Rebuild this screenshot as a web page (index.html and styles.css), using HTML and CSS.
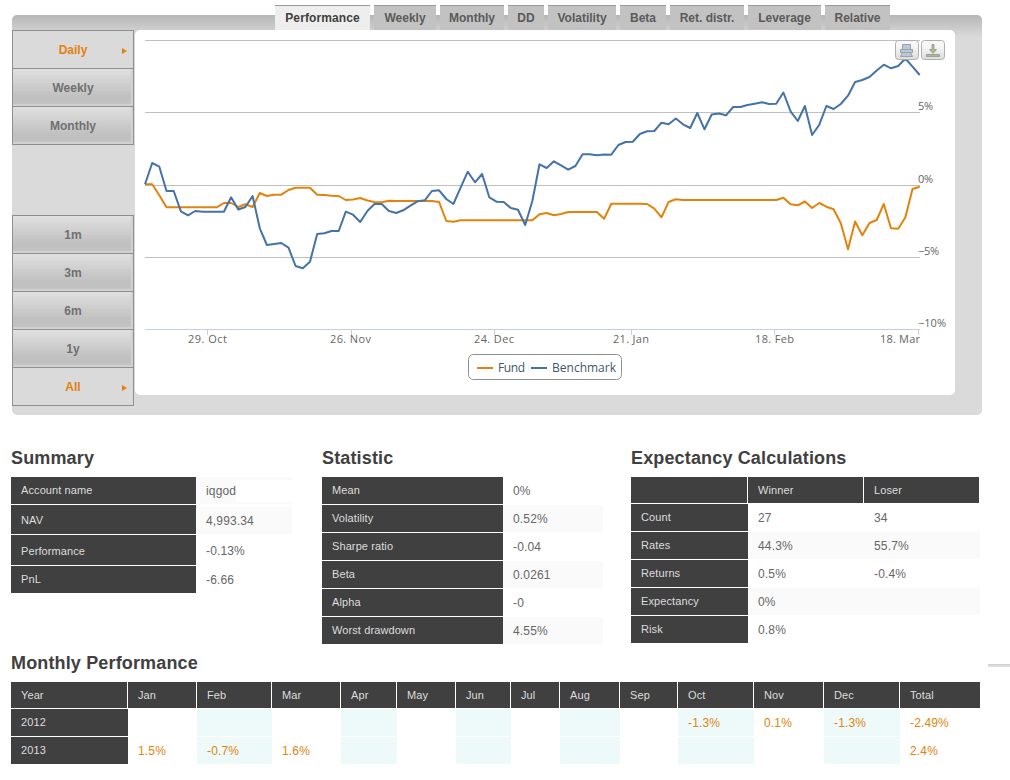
FILE: index.html
```
<!DOCTYPE html>
<html lang="en">
<head>
    <meta charset="UTF-8">
    <meta name="viewport" content="width=device-width, initial-scale=1.0">
    <title>Account Performance</title>
    <link rel="stylesheet" href="styles.css">
</head>
<body>

    <!-- Chart Panel -->
    <div class="panel">
        <div class="tabs">
            <a class="tab tab-1 active">Performance</a>
            <a class="tab tab-2">Weekly</a>
            <a class="tab tab-3">Monthly</a>
            <a class="tab tab-4">DD</a>
            <a class="tab tab-5">Volatility</a>
            <a class="tab tab-6">Beta</a>
            <a class="tab tab-7">Ret. distr.</a>
            <a class="tab tab-8">Leverage</a>
            <a class="tab tab-9">Relative</a>
        </div>
        <div class="panel-body">
            <div class="sidebar">
                <div class="menu">
                    <a class="selected">Daily</a>
                    <a>Weekly</a>
                    <a>Monthly</a>
                </div>
                <div class="menu">
                    <a>1m</a>
                    <a>3m</a>
                    <a>6m</a>
                    <a>1y</a>
                    <a class="selected">All</a>
                </div>
            </div>
            <div class="chart">
                <svg width="820" height="365" viewBox="0 0 820 365">
                    <defs>
                        <linearGradient id="btn" x1="0" y1="0" x2="0" y2="1">
                            <stop offset="0.3" stop-color="#f7f7f7"/>
                            <stop offset="1" stop-color="#dcdcdc"/>
                        </linearGradient>
                    </defs>
                    <!-- Grid -->
                    <path class="grid" d="M10 10.5H785M10 82.5H785M10 155.5H785M10 227.5H785"/>
                    <path class="axis" d="M10 299.5H785M72.5 299V305M216.5 299V305M359.5 299V305M496.5 299V305M639.5 299V305M783.5 299V305"/>
                    <!-- Series -->
                    <polyline id="fund" class="line fund"/>
                    <polyline id="benchmark" class="line benchmark"/>
                    <!-- Labels -->
                    <g class="labels">
                        <text x="783" y="80" textLength="15">5%</text>
                        <text x="783" y="153" textLength="15">0%</text>
                        <text x="783" y="225" textLength="21">−5%</text>
                        <text x="783" y="297" textLength="28">−10%</text>
                        <text x="53" y="313" textLength="39">29. Oct</text>
                        <text x="195" y="313" textLength="41">26. Nov</text>
                        <text x="339" y="313" textLength="40">24. Dec</text>
                        <text x="478" y="313" textLength="36">21. Jan</text>
                        <text x="620" y="313" textLength="39">18. Feb</text>
                        <text x="745" y="313" textLength="40">18. Mar</text>
                    </g>
                    <!-- Legend -->
                    <rect class="legend-box" x="333.5" y="324.5" width="153" height="25" rx="5"/>
                    <path class="line fund" d="M342 338H358"/>
                    <path class="line benchmark" d="M396 338H412"/>
                    <g class="legend-text">
                        <text x="363" y="342" textLength="27">Fund</text>
                        <text x="417" y="342" textLength="64">Benchmark</text>
                    </g>
                    <!-- Print -->
                    <rect class="export" x="760.5" y="10.5" width="23" height="19" rx="3"/>
                    <g class="print">
                        <path d="M767.5 14.5h8v5h-8z"/>
                        <path d="M765.5 19.5h12v3h-12z"/>
                        <path d="M767.5 22.5h8l2 4h-12z"/>
                    </g>
                    <!-- Download -->
                    <rect class="export" x="786.5" y="10.5" width="23" height="19" rx="3"/>
                    <g class="download">
                        <path d="M797 14.5h2v5h2.5l-3.5 4l-3.5 -4h2.5z"/>
                        <path d="M791.5 24.5h13v2h-13z"/>
                    </g>
                </svg>
            </div>
        </div>
    </div>

    <!-- Tables -->
    <div class="stats">
        <div class="summary">
            <h2>Summary</h2>
            <table>
                <tr class="shade"><th>Account name</th><td><div class="account"><span>iqgod</span></div></td></tr>
                <tr class="shade nav"><th>NAV</th><td>4,993.34</td></tr>
                <tr class="perf"><th>Performance</th><td>-0.13%</td></tr>
                <tr><th>PnL</th><td>-6.66</td></tr>
            </table>
        </div>
        <div class="statistic">
            <h2>Statistic</h2>
            <table>
                <tr><th>Mean</th><td>0%</td></tr>
                <tr class="shade"><th>Volatility</th><td>0.52%</td></tr>
                <tr><th>Sharpe ratio</th><td>-0.04</td></tr>
                <tr class="shade"><th>Beta</th><td>0.0261</td></tr>
                <tr><th>Alpha</th><td>-0</td></tr>
                <tr class="shade"><th>Worst drawdown</th><td>4.55%</td></tr>
            </table>
        </div>
        <div class="expectancy">
            <h2>Expectancy Calculations</h2>
            <table>
                <tr class="head"><th></th><th>Winner</th><th>Loser</th></tr>
                <tr><th>Count</th><td>27</td><td>34</td></tr>
                <tr class="shade"><th>Rates</th><td>44.3%</td><td>55.7%</td></tr>
                <tr><th>Returns</th><td>0.5%</td><td>-0.4%</td></tr>
                <tr class="shade"><th>Expectancy</th><td>0%</td><td></td></tr>
                <tr><th>Risk</th><td>0.8%</td><td></td></tr>
            </table>
        </div>
    </div>

    <!-- Monthly Performance -->
    <div class="monthly">
        <div class="monthly-title">
            <h2>Monthly Performance</h2>
            <div class="divider"></div>
        </div>
        <table>
            <colgroup>
                <col class="w117"><col class="w69"><col class="w75"><col class="w69"><col class="w56"><col class="w59"><col class="w55">
                <col class="w49"><col class="w60"><col class="w58"><col class="w76"><col class="w70"><col class="w76"><col class="w81">
            </colgroup>
            <tr class="head">
                <th>Year</th><th>Jan</th><th>Feb</th><th>Mar</th><th>Apr</th><th>May</th><th>Jun</th>
                <th>Jul</th><th>Aug</th><th>Sep</th><th>Oct</th><th>Nov</th><th>Dec</th><th>Total</th>
            </tr>
            <tr>
                <th>2012</th><td></td><td></td><td></td><td></td><td></td><td></td>
                <td></td><td></td><td></td><td>-1.3%</td><td>0.1%</td><td>-1.3%</td><td>-2.49%</td>
            </tr>
            <tr>
                <th>2013</th><td>1.5%</td><td>-0.7%</td><td>1.6%</td><td></td><td></td><td></td>
                <td></td><td></td><td></td><td></td><td></td><td></td><td>2.4%</td>
            </tr>
        </table>
    </div>

    <!-- JavaScript -->
    <script>
        // Line heights in chart pixels, one per trading day
        const fund = [
            154.3, 154.3, 165.3, 177.3, 177.3, 177.3, 177.3, 177.3, 177.3, 177.3, 177.3, 173, 173, 177, 174.3, 177,
            163, 166, 164.7, 164.7, 160, 157.7, 157.7, 157.7, 164.7, 165, 165.7, 166, 170, 169.5, 168, 170.5,
            172, 172.2, 170.7, 171, 171, 171, 171, 171, 171, 172, 191, 191.7, 190.3, 190.3, 190.3, 190.3,
            190.3, 190.3, 190.3, 190.3, 190.3, 190.3, 190.3, 184.3, 183, 185.3, 184, 182, 182, 182, 182, 182,
            188.7, 173.7, 173.7, 173.7, 173.7, 173.7, 174, 178.7, 187.3, 172, 169.3, 170, 170, 170, 170, 170,
            170, 170, 170, 170, 170, 170, 170, 170, 170, 167.7, 174.3, 175.3, 171.5, 178, 173, 176.7,
            179.3, 193.3, 219.3, 191.5, 205.3, 193, 190, 174, 198.3, 198.7, 187.3, 159, 156.7
        ];
        const benchmark = [
            154.3, 133, 136.7, 161, 161, 181.3, 185.3, 181, 181.7, 181.7, 181.7, 181.7, 167.3, 179.5, 177, 166,
            198.3, 215, 214, 213, 217.7, 236, 238.3, 231.7, 204, 203.3, 201, 201, 181.7, 184.7, 192, 181,
            174, 174, 181, 183, 180.3, 175.7, 171.3, 170.3, 161, 160.3, 169, 174, 157.7, 141.7, 152.3, 144,
            167.3, 171.7, 172, 178, 179.7, 195, 170.7, 134.3, 138, 131.3, 135.3, 139.7, 136, 124.3, 124.3, 125.3,
            124.5, 124.7, 115, 112, 111.7, 104, 101.3, 101, 92.7, 94.3, 88.5, 94.3, 98, 83, 99.3, 84.5,
            83.5, 85.3, 77, 77, 75, 73.7, 72.3, 74, 73.7, 62.5, 81.3, 91, 76, 105, 94.7, 76,
            79, 74, 65.7, 52, 50, 47, 40.5, 34.7, 38.3, 36, 28.5, 36.7, 45
        ];

        // Draw Line
        function drawLine(id, data) {
            const step = 774.7 / (data.length - 1);
            const points = data.map((y, i) => (10 + i * step).toFixed(1) + ',' + y);
            document.getElementById(id).setAttribute('points', points.join(' '));
        }

        drawLine('fund', fund);
        drawLine('benchmark', benchmark);
    </script>

</body>
</html>
```
FILE: styles.css
```
* {
    margin: 0;
    padding: 0;
    box-sizing: border-box;
}
body {
    background-color: #ffffff;
    font-family: "Liberation Sans", Arial, sans-serif;
    font-size: 12px;
    overflow: hidden;
}
.panel {
    margin: 15px 0 0 12px;
    width: 970px;
    height: 400px;
    border-radius: 5px;
    background: #dadada linear-gradient(#b6b6b6, #dadada) no-repeat 0 0 / 100% 22px;
}
.tabs {
    display: flex;
    gap: 4px;
    height: 15px;
    padding-left: 263px;
}
.tab {
    height: 25px;
    margin-top: -10px;
    border-top: 1px solid #999999;
    background-color: #c2c2c2;
    color: #5a5a5a;
    font-weight: bold;
    line-height: 24px;
    text-align: center;
    white-space: nowrap;
}
.tab.active {
    background-color: #eeeeee;
    color: #404040;
    letter-spacing: 0.1px;
}
.tab-1 { width: 95px; }
.tab-2 { width: 62px; }
.tab-3 { width: 64px; }
.tab-4 { width: 36px; }
.tab-5 { width: 68px; }
.tab-6 { width: 46px; }
.tab-7 { width: 74px; }
.tab-8 { width: 73px; }
.tab-9 { width: 65px; }
.panel-body {
    display: flex;
    gap: 1px;
}
.sidebar {
    display: flex;
    flex-direction: column;
    gap: 70px;
    width: 122px;
}
.menu {
    border: 1px solid #8f8f8f;
    border-top: none;
}
.menu a {
    display: block;
    height: 38px;
    border-top: 1px solid #8f8f8f;
    background: linear-gradient(#e0e0e0, #c0c0c0 75%, #c2c2c2);
    box-shadow: inset -2px -2px 1px #d2d2d2;
    color: #707070;
    font-weight: bold;
    line-height: 39px;
    text-align: center;
}
.menu a.selected {
    position: relative;
    background: #dadada;
    box-shadow: none;
    color: #e3820c;
}
.menu a.selected::after {
    content: "";
    position: absolute;
    top: 17px;
    right: 6px;
    border: 3px solid transparent;
    border-left: 5px solid #e3820c;
    border-right: none;
}
.chart {
    width: 820px;
    height: 365px;
    border-radius: 5px;
    background-color: #ffffff;
}
.chart svg {
    display: block;
}
.grid {
    stroke: #c0c0c0;
}
.axis {
    stroke: #c0d0e0;
}
.line {
    fill: none;
    stroke-width: 2;
    stroke-linejoin: round;
}
.fund {
    stroke: #e3820c;
}
.benchmark {
    stroke: #4572a7;
}
.labels {
    font-family: "Open Sans", "Noto Sans", sans-serif;
    font-size: 11px;
    fill: #666666;
}
.legend-box {
    fill: #ffffff;
    stroke: #909090;
}
.legend-text {
    font-family: "Open Sans", "Noto Sans", sans-serif;
    font-size: 12px;
    fill: #3e576f;
}
.export {
    fill: url(#btn);
    stroke: #b0b0b0;
}
.print {
    fill: #b5c9df;
    stroke: #a0a0a0;
}
.download {
    fill: #a8bf77;
    stroke: #a0a0a0;
}
h2 {
    height: 39px;
    color: #404040;
    font-size: 18px;
    line-height: 41px;
    letter-spacing: 0.15px;
    white-space: nowrap;
}
table {
    border-collapse: separate;
    border-spacing: 0;
    table-layout: fixed;
}
th {
    height: 28px;
    padding: 0 0 1px 10px;
    border-bottom: 1px solid #ffffff;
    background-color: #404040;
    background-clip: padding-box;
    color: #dddddd;
    font-size: 11px;
    font-weight: normal;
    text-align: left;
    letter-spacing: 0.1px;
}
td {
    height: 28px;
    padding: 1px 0 0 10px;
    border-bottom: 1px solid #ffffff;
    background-clip: padding-box;
    color: #666666;
    letter-spacing: 0.15px;
}
.shade td {
    background-color: #fafafa;
}
.head th {
    height: 27px;
    padding-bottom: 0;
    border-right: 1px solid #ffffff;
}
.stats {
    display: flex;
    height: 205px;
    margin: 23px 0 0 11px;
}
.summary {
    width: 311px;
}
.summary table {
    width: 281px;
}
.summary th {
    width: 185px;
}
.account {
    display: flex;
    align-items: center;
    height: 22px;
}
.account::after {
    content: "";
    flex: 1;
    height: 22px;
    background-color: #ffffff;
}
.account span {
    width: 30px;
}
.nav th, .nav td {
    height: 30px;
    padding-bottom: 0;
}
.perf th, .perf td {
    height: 31px;
    padding-top: 2px;
    padding-bottom: 0;
}
.nav td {
    border-top: 2px solid #ffffff;
    padding-top: 0;
}
.statistic {
    width: 309px;
}
.statistic table {
    width: 281px;
}
.statistic th {
    width: 181px;
}
.expectancy table {
    width: 349px;
}
.expectancy th {
    width: 117px;
}
.expectancy th + th {
    width: 116px;
}
.monthly {
    margin-left: 11px;
}
.monthly-title {
    display: flex;
    justify-content: space-between;
    align-items: center;
}
.divider {
    width: 22px;
    height: 3px;
    margin-top: 5px;
    border-top: 1px solid #d0d0d0;
    background-color: #dddddd;
}
.monthly table {
    width: 970px;
}
.monthly td {
    color: #e3820c;
}
.monthly tr td:nth-child(odd):not(:last-child) {
    background-color: #eefafa;
}
.monthly tr td:last-child {
    background-color: #ffffff;
}
.w49 { width: 49px; }
.w55 { width: 55px; }
.w56 { width: 56px; }
.w58 { width: 58px; }
.w59 { width: 59px; }
.w60 { width: 60px; }
.w69 { width: 69px; }
.w70 { width: 70px; }
.w75 { width: 75px; }
.w76 { width: 76px; }
.w81 { width: 81px; }
.w117 { width: 117px; }
```
